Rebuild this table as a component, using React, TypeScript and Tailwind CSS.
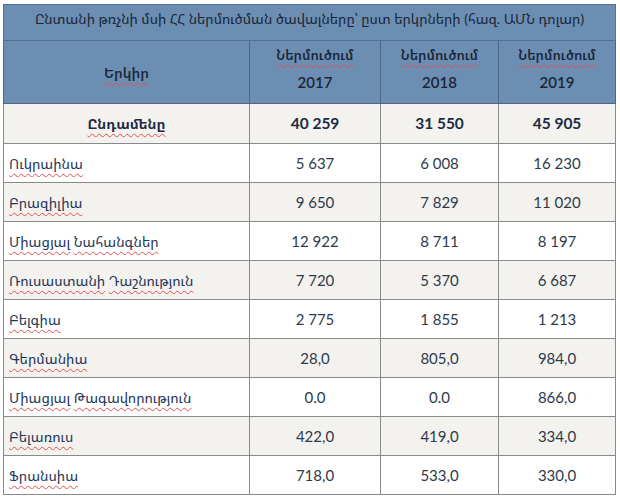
import React from "react";

const rows: [string, string, string, string][] = [
  ["Ուկրաինա", "5 637", "6 008", "16 230"],
  ["Բրազիլիա", "9 650", "7 829", "11 020"],
  ["Միացյալ Նահանգներ", "12 922", "8 711", "8 197"],
  ["Ռուսաստանի Դաշնություն", "7 720", "5 370", "6 687"],
  ["Բելգիա", "2 775", "1 855", "1 213"],
  ["Գերմանիա", "28,0", "805,0", "984,0"],
  ["Միացյալ Թագավորություն", "0.0", "0.0", "866,0"],
  ["Բելառուս", "422,0", "419,0", "334,0"],
  ["Ֆրանսիա", "718,0", "533,0", "330,0"],
];

const sq =
  "underline decoration-wavy decoration-[#e05050] decoration-[1px] underline-offset-[4px]";

function Words({ text }: { text: string }) {
  const parts = text.split(" ");
  return (
    <>
      {parts.map((p, i) => (
        <React.Fragment key={i}>
          <span className={sq}>{p}</span>
          {i < parts.length - 1 ? " " : ""}
        </React.Fragment>
      ))}
    </>
  );
}

export default function App() {
  return (
    <div className="w-[620px] h-[498px] bg-white pl-[3px] pt-[4px] font-['Lato','Noto_Sans_Armenian','DejaVu_Sans',sans-serif]">
      <table className="border-collapse w-[612px] table-fixed">
        <colgroup>
          <col className="w-[246px]" />
          <col className="w-[131px]" />
          <col className="w-[118px]" />
          <col className="w-[117px]" />
        </colgroup>
        <thead>
          <tr className="h-[36px] bg-[#6d8eb3]">
            <th
              colSpan={4}
              className="border border-[#566f8c] text-center font-normal text-[13.9px] text-[#1a2638] pb-[6px]"
            >
              Ընտանի թռչնի մսի ՀՀ ներմուծման ծավալները՝ ըստ երկրների (հազ. ԱՄՆ դոլար)
            </th>
          </tr>
          <tr className="h-[63px] bg-[#6d8eb3] text-[#1a2638]">
            <th className="border border-[#4f6784] text-center font-semibold text-[14px]">
              <span className={sq}>Երկիր</span>
            </th>
            {["2017", "2018", "2019"].map((y) => (
              <th
                key={y}
                className="border border-[#4f6784] text-center font-semibold text-[13.5px] leading-[27px] pb-[6px]"
              >
                <div>
                  <span className={sq}>Ներմուծում</span>
                </div>
                <div className="text-[15px] font-semibold">{y}</div>
              </th>
            ))}
          </tr>
        </thead>
        <tbody className="text-[#2e3a4b]">
          <tr className="h-[40px] bg-[#f4f2ee]">
            <td className="border border-[#8a8a8a] text-center font-bold text-[14px] text-[#1c2a44]">
              <span className={sq}>Ընդամենը</span>
            </td>
            <td className="border border-[#8a8a8a] text-center font-bold text-[15.5px] text-[#1c2a44]">40 259</td>
            <td className="border border-[#8a8a8a] text-center font-bold text-[15.5px] text-[#1c2a44]">31 550</td>
            <td className="border border-[#8a8a8a] text-center font-bold text-[15.5px] text-[#1c2a44]">45 905</td>
          </tr>
          {rows.map((r, i) => (
            <tr key={r[0]} className={i % 2 === 0 ? "h-[39px] bg-white" : "h-[39px] bg-[#f4f2ee]"}>
              <td className="border border-[#8a8a8a] pl-[5px] text-left text-[14px] text-[#24365a] whitespace-nowrap">
                <Words text={r[0]} />
              </td>
              <td className="border border-[#8a8a8a] text-center text-[15px]">{r[1]}</td>
              <td className="border border-[#8a8a8a] text-center text-[15px]">{r[2]}</td>
              <td className="border border-[#8a8a8a] text-center text-[15px]">{r[3]}</td>
            </tr>
          ))}
        </tbody>
      </table>
    </div>
  );
}
